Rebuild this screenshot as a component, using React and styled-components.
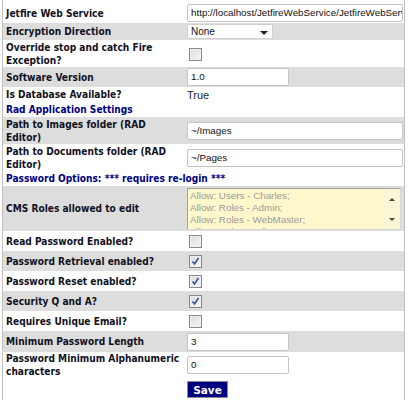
import React from "react";
import styled, { createGlobalStyle } from "styled-components";

const Global = createGlobalStyle`
  html, body { margin: 0; padding: 0; background: #fff; }
  body { font-family: "DejaVu Sans Condensed", "DejaVu Sans", Verdana, sans-serif; }
`;

const Frame = styled.div`
  width: 403px;
  margin-left: 2px;
  border: 1px solid #c0c0c0;
  border-top: none;
  padding-top: 3px;
  box-sizing: border-box;
  height: 400px;
`;

const Row = styled.div`
  display: grid;
  grid-template-columns: 182px 1fr;
  align-items: center;
  background: ${(p) => (p.$shade ? "#dddddd" : "#ffffff")};
  min-height: ${(p) => p.$h || 15}px;
`;

const Label = styled.div`
  padding: 0 3px;
  font-family: "DejaVu Sans Condensed", "DejaVu Sans", Verdana, sans-serif;
  font-size: 10.1px;
  line-height: 13px;
  font-weight: bold;
  color: #111122;
`;

const Value = styled.div`
  padding: 1px 2px;
  display: flex;
  align-items: center;
  font-family: "Liberation Sans", Arial, sans-serif;
  font-size: 11px;
  color: #222;
`;

const Heading = styled.div`
  grid-column: 1 / span 2;
  padding: 0 3px;
  font-family: "DejaVu Sans Condensed", "DejaVu Sans", Verdana, sans-serif;
  font-size: 10.1px;
  line-height: 15px;
  font-weight: bold;
  color: #000080;
`;

const TextInput = styled.div`
  box-sizing: border-box;
  width: ${(p) => p.$w}px;
  height: 18px;
  border: 1px solid #c4c4c4;
  border-radius: 2px;
  background: #fff;
  padding: 0 3px;
  font-family: "Liberation Sans", Arial, sans-serif;
  font-size: 9.8px;
  line-height: 16px;
  color: #111;
  white-space: nowrap;
  overflow: hidden;
`;

const Select = styled.div`
  box-sizing: border-box;
  width: 86px;
  height: 15px;
  border: 1px solid #d0d0d0;
  background: #fff;
  display: flex;
  align-items: center;
  justify-content: space-between;
  padding: 0 4px 0 3px;
  font-family: "Liberation Sans", Arial, sans-serif;
  font-size: 10px;
  color: #111;
`;

const Arrow = styled.span`
  width: 0;
  height: 0;
  border-left: 4px solid transparent;
  border-right: 4px solid transparent;
  border-top: 4px solid #222;
  margin-top: 2px;
`;

const Box = styled.span`
  box-sizing: border-box;
  display: inline-flex;
  align-items: center;
  justify-content: center;
  width: 13px;
  height: 13px;
  margin: 3px 3px 2px 2px;
  border: 1px solid #888;
  background: linear-gradient(135deg, #dcdcdc 0%, #f6f6f6 100%);
  box-shadow: inset 0 0 0 1px #f0f0f0;
`;

const Check = ({ on }) => (
  <Box>
    {on && (
      <svg width="9" height="9" viewBox="0 0 9 9">
        <path d="M1.5 4.5 L3.5 7 L7.5 1" fill="none" stroke="#3a4fa0" strokeWidth="1.6" />
      </svg>
    )}
  </Box>
);

const ListBox = styled.div`
  box-sizing: border-box;
  width: 214px;
  height: 42px;
  border: 1px solid #a0a0a0;
  border-right-color: #d8d8d8;
  border-bottom-color: #d8d8d8;
  background: #fff8cc;
  display: flex;
  overflow: hidden;
`;

const ListItems = styled.div`
  flex: 1;
  padding: 1px 2px;
  font-family: "Liberation Sans", Arial, sans-serif;
  font-size: 9.8px;
  line-height: 12px;
  color: #9a9a9a;
  white-space: nowrap;
  overflow: hidden;
`;

const ScrollBar = styled.div`
  width: 17px;
  display: flex;
  flex-direction: column;
  justify-content: space-between;
  align-items: center;
  padding: 9px 0 8px;
  background: #fbf6d6;
`;

const Tri = styled.span`
  width: 0;
  height: 0;
  border-left: 3px solid transparent;
  border-right: 3px solid transparent;
  ${(p) => (p.$up ? "border-bottom: 3px solid #444;" : "border-top: 3px solid #444;")}
`;

const SaveButton = styled.button`
  box-sizing: border-box;
  width: 41px;
  height: 17px;
  margin: 2px 0;
  padding: 0;
  border: 1px solid #8a8a9a;
  background: #000080;
  color: #fff;
  font-family: "DejaVu Sans", Verdana, sans-serif;
  font-weight: bold;
  font-size: 10.5px;
  line-height: 14px;
`;

const Section = ({ children }) => (
  <Row>
    <Heading>{children}</Heading>
  </Row>
);

export default function App() {
  return (
    <>
      <Global />
      <Frame>
        <Row $h={20}>
          <Label>Jetfire Web Service</Label>
          <Value>
            <TextInput $w={216}>http://localhost/JetfireWebService/JetfireWebService.asmx</TextInput>
          </Value>
        </Row>
        <Row $shade $h={17}>
          <Label>Encryption Direction</Label>
          <Value>
            <Select>
              None <Arrow />
            </Select>
          </Value>
        </Row>
        <Row $h={27}>
          <Label>Override stop and catch Fire Exception?</Label>
          <Value>
            <Check />
          </Value>
        </Row>
        <Row $shade $h={20}>
          <Label>Software Version</Label>
          <Value>
            <TextInput $w={102}>1.0</TextInput>
          </Value>
        </Row>
        <Row $h={15}>
          <Label>Is Database Available?</Label>
          <Value>True</Value>
        </Row>
        <Section>Rad Application Settings</Section>
        <Row $shade $h={27}>
          <Label>Path to Images folder (RAD Editor)</Label>
          <Value>
            <TextInput $w={216}>~/Images</TextInput>
          </Value>
        </Row>
        <Row $h={27}>
          <Label>Path to Documents folder (RAD Editor)</Label>
          <Value>
            <TextInput $w={216}>~/Pages</TextInput>
          </Value>
        </Row>
        <Section>Password Options: *** requires re-login ***</Section>
        <Row $shade $h={45}>
          <Label>CMS Roles allowed to edit</Label>
          <Value>
            <ListBox>
              <ListItems>
                Allow: Users - Charles;
                <br />
                Allow: Roles - Admin;
                <br />
                Allow: Roles - WebMaster;
                <br />
                Allow: Roles - Editor;
              </ListItems>
              <ScrollBar>
                <Tri $up />
                <Tri />
              </ScrollBar>
            </ListBox>
          </Value>
        </Row>
        <Row $h={20}>
          <Label>Read Password Enabled?</Label>
          <Value>
            <Check />
          </Value>
        </Row>
        <Row $shade $h={20}>
          <Label>Password Retrieval enabled?</Label>
          <Value>
            <Check on />
          </Value>
        </Row>
        <Row $h={20}>
          <Label>Password Reset enabled?</Label>
          <Value>
            <Check on />
          </Value>
        </Row>
        <Row $shade $h={19}>
          <Label>Security Q and A?</Label>
          <Value>
            <Check on />
          </Value>
        </Row>
        <Row $h={20}>
          <Label>Requires Unique Email?</Label>
          <Value>
            <Check />
          </Value>
        </Row>
        <Row $shade $h={21}>
          <Label>Minimum Password Length</Label>
          <Value>
            <TextInput $w={102}>3</TextInput>
          </Value>
        </Row>
        <Row $h={26}>
          <Label>Password Minimum Alphanumeric characters</Label>
          <Value>
            <TextInput $w={102}>0</TextInput>
          </Value>
        </Row>
        <Row $h={21}>
          <Label />
          <Value>
            <SaveButton>Save</SaveButton>
          </Value>
        </Row>
      </Frame>
    </>
  );
}
